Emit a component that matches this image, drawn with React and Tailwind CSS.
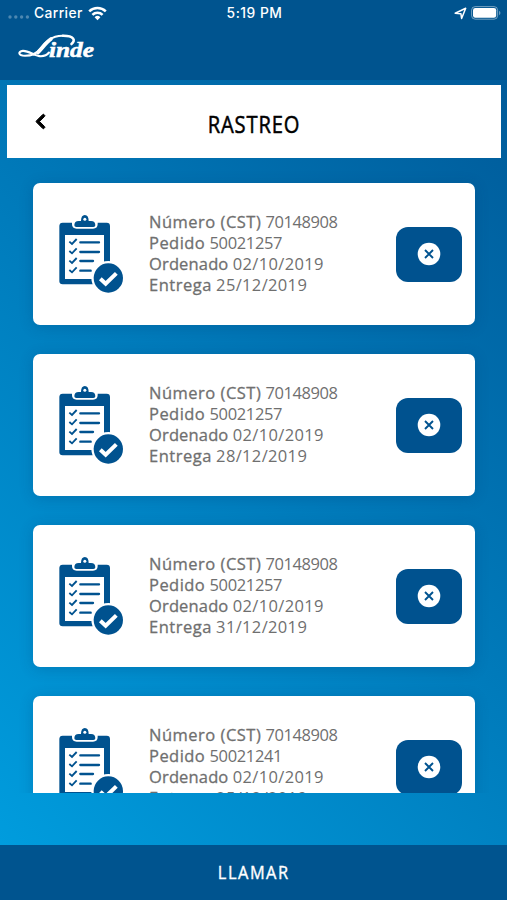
import React from 'react';
import { FaChevronLeft } from 'react-icons/fa';

const orders = [
  { id: 1, cst: '70148908', pedido: '50021257', ordenado: '02/10/2019', entrega: '25/12/2019' },
  { id: 2, cst: '70148908', pedido: '50021257', ordenado: '02/10/2019', entrega: '28/12/2019' },
  { id: 3, cst: '70148908', pedido: '50021257', ordenado: '02/10/2019', entrega: '31/12/2019' },
  { id: 4, cst: '70148908', pedido: '50021241', ordenado: '02/10/2019', entrega: '25/12/2019' },
];

function StatusBar() {
  return (
    <div className="grid grid-cols-3 items-center h-[26px] pl-2 pr-[6px] text-white font-['Inter',sans-serif] text-[13.8px] font-medium">
      <div className="flex items-center">
        <svg width="22" height="4" viewBox="0 0 22 4" className="mt-2 opacity-30" fill="#fff">
          <circle cx="2" cy="2" r="1.7" />
          <circle cx="7.8" cy="2" r="1.7" />
          <circle cx="13.6" cy="2" r="1.7" />
          <circle cx="19.4" cy="2" r="1.7" />
        </svg>
        <span className="ml-1 tracking-[0.4px]">Carrier</span>
        <svg width="19" height="15" viewBox="0 0 19 15" className="ml-[5px]" fill="none" stroke="#fff" strokeWidth="2.5">
          <path d="M1.2 5.4a11.8 11.8 0 0 1 16.6 0" />
          <path d="M4.4 8.8a7.2 7.2 0 0 1 10.2 0" />
          <path d="M9.5 14.2 6.6 11.2a4.2 4.2 0 0 1 5.8 0z" fill="#fff" stroke="none" />
        </svg>
      </div>
      <span className="text-center tracking-[0.5px]">5:19 PM</span>
      <div className="flex items-center justify-end gap-1">
        <svg width="13" height="13" viewBox="0 0 13 13" fill="none" stroke="#fff" strokeWidth="1.5" strokeLinejoin="round">
          <path d="M1.2 6.3 11.7 1.3 7.6 11.5 6.9 6.7z" />
        </svg>
        <svg width="30" height="14" viewBox="0 0 30 14">
          <rect x="0.6" y="0.6" width="26" height="12.6" rx="3.6" fill="none" stroke="#fff" strokeOpacity="0.45" />
          <rect x="2" y="2" width="23.2" height="9.8" rx="2.3" fill="#fff" />
          <path d="M28.2 4.8v4.4c1.6-.7 1.6-3.7 0-4.4z" fill="#fff" fillOpacity="0.5" />
        </svg>
      </div>
    </div>
  );
}

function Logo() {
  return (
    <svg width="80" height="26" viewBox="0 0 80 26" className="ml-[17px] mt-[7px]" fill="none" stroke="#fff" strokeLinecap="round">
      {/* swash around the wordmark */}
      <path d="M46 2.7C34 2.5 28 9.5 23.5 15.5 19.5 21 13 22.8 8 22.8 1 22.6 .8 18.4 5.8 17.9 12 17.4 17.5 23.2 24 23.2 28 23.2 30.5 21.5 32 19.5" strokeWidth="2.1" />
      <path d="M34 6C29 9.5 25.5 15 21 19.5" strokeWidth="3.6" />
      <path d="M46 2.7C57 2.6 59 7.5 54.5 11" strokeWidth="2.6" />
      <text
        x="32"
        y="23.5"
        textLength="45"
        lengthAdjust="spacingAndGlyphs"
        fill="#fff"
        strokeWidth="0.5"
        className="font-['Liberation_Serif',serif] font-bold italic text-[20px]"
      >
        inde
      </text>
    </svg>
  );
}

function ClipboardIcon() {
  return (
    <svg width="66" height="80" viewBox="54 42 198 240" fill="none" className="shrink-0">
      <rect x="58" y="68" width="152" height="185" rx="10" fill="#00528f" />
      <rect x="75" y="105" width="117" height="132" fill="#fff" />
      <path d="M96 66v6q0 14 14 14h49q14 0 14-14v-6z" fill="#fff" />
      <path d="M103 76q0-13 13-13h7q0-18 11.5-18t11.5 18h7q13 0 13 13 0 5-6 5h-51q-6 0-6-5z" fill="#00528f" />
      <circle cx="134.5" cy="58" r="4.5" fill="#fff" />
      <g stroke="#00528f" strokeWidth="5.5">
        <path d="m88 125 8 7 14-15M88 153l8 7 14-15M88 182l8 7 14-15M88 210l8 7 14-15" />
        <path strokeWidth="7" strokeLinecap="round" d="M121 127h56M121 156h56M121 183h38M121 212h31" />
      </g>
      <circle cx="205" cy="234" r="51" fill="#fff" />
      <circle cx="205" cy="234" r="44" fill="#00528f" />
      <path d="m181 236 16 15 32-31" stroke="#fff" strokeWidth="12" />
    </svg>
  );
}

function Row({ label, value, labelClass, valueClass }) {
  return (
    <p className="whitespace-nowrap">
      <span className={`[-webkit-text-stroke:0.3px] ${labelClass}`}>{label}</span>{' '}
      <span className={valueClass}>{value}</span>
    </p>
  );
}

function OrderCard({ order }) {
  return (
    <div className="flex items-center h-[142px] shrink-0 bg-white rounded-[7px] pl-[25px] pr-[13px] shadow-[0_2px_14px_rgba(0,50,100,0.22)]">
      <ClipboardIcon />
      <div className="ml-[25px] flex-1 text-[16.5px] leading-[20.8px] text-[#6f6f6f] font-['Open_Sans',sans-serif]">
        <Row label="Número (CST)" value={order.cst} labelClass="tracking-[0.5px]" valueClass="tracking-[-0.45px]" />
        <Row label="Pedido" value={order.pedido} labelClass="tracking-[0.45px]" valueClass="tracking-[-0.35px]" />
        <Row label="Ordenado" value={order.ordenado} labelClass="tracking-[0.15px]" valueClass="tracking-[0.35px]" />
        <Row label="Entrega" value={order.entrega} labelClass="tracking-[0.5px]" valueClass="tracking-[0.35px]" />
      </div>
      <button className="flex items-center justify-center w-[66px] h-[55px] rounded-[12px] bg-[#00528f]">
        <svg width="24" height="24" viewBox="0 0 24 24">
          <circle cx="12" cy="12" r="11.3" fill="#fff" />
          <path d="m8 8 8 8M16 8l-8 8" stroke="#00528f" strokeWidth="1.9" />
        </svg>
      </button>
    </div>
  );
}

export default function App() {
  return (
    <div className="flex flex-col w-[507px] h-[900px] overflow-hidden bg-[linear-gradient(45deg,#009fe0,#005796)]">
      <header className="h-[80px] shrink-0 bg-[#00548f]">
        <StatusBar />
        <Logo />
      </header>

      <div className="grid grid-cols-[60px_1fr_60px] items-center h-[73px] shrink-0 mt-[5px] ml-[7px] mr-[6px] bg-white text-black">
        <button className="pl-[25px]">
          <FaChevronLeft size={17} stroke="black" strokeWidth={30} />
        </button>
        <h1 className="pt-[5px] text-center text-[24px] tracking-[1px] scale-x-[0.84] [-webkit-text-stroke:0.5px] font-['Open_Sans',sans-serif]">
          RASTREO
        </h1>
      </div>

      <main className="flex flex-col gap-[29px] h-[635px] shrink-0 overflow-hidden pt-[25px] pl-[33px] pr-8">
        {orders.map((order) => (
          <OrderCard key={order.id} order={order} />
        ))}
      </main>

      <button className="mt-auto h-[55px] shrink-0 bg-[#00548f] text-white text-[19px] tracking-[1.8px] font-['Open_Sans',sans-serif]">
        <span className="inline-block scale-x-[0.86] [-webkit-text-stroke:0.4px]">LLAMAR</span>
      </button>
    </div>
  );
}
